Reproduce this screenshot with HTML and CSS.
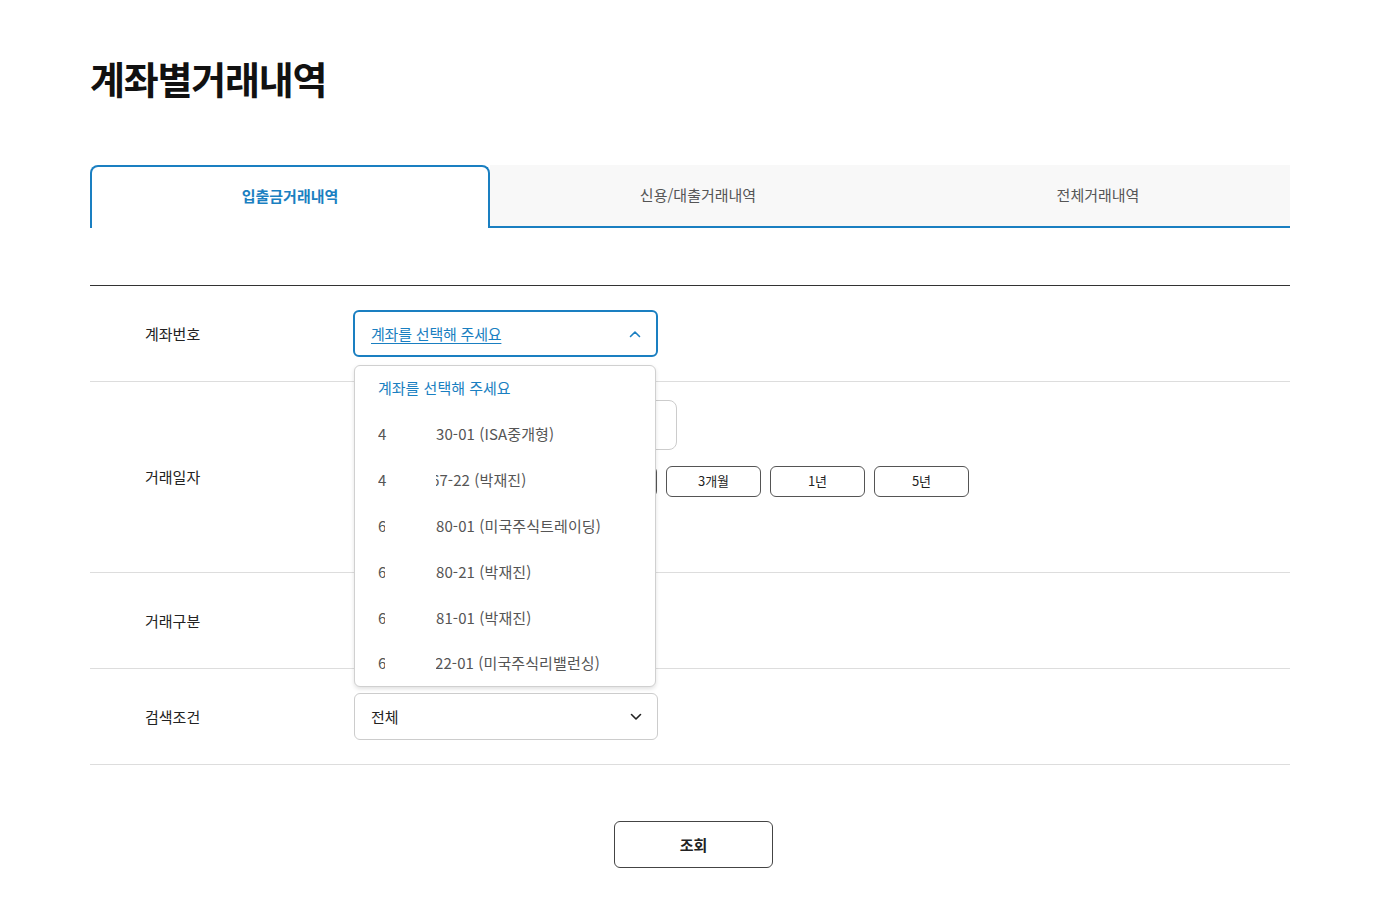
FILE: index.html
```html
<!DOCTYPE html>
<html lang="ko">
<head>
<meta charset="utf-8">
<title>계좌별거래내역</title>
<link rel="stylesheet" href="styles.css">
</head>
<body>
<div class="page">
  <h1 class="title">계좌별거래내역</h1>

  <div class="tabs">
    <div class="tab active">입출금거래내역</div>
    <div class="tab tab-mid">신용/대출거래내역</div>
    <div class="tab tab-last">전체거래내역</div>
  </div>

  <div class="form">
    <div class="row row-std">
      <div class="label">계좌번호</div>
      <div class="field">
        <div class="select-wrap">
          <div class="select open">
            <span class="select-text">계좌를 선택해 주세요</span>
            <svg class="chev" width="12" height="8" viewBox="0 0 12 8"><path d="M1.5 6.5 L6 2 L10.5 6.5" fill="none" stroke="#1a7fc1" stroke-width="1.6" stroke-linecap="round" stroke-linejoin="round"/></svg>
          </div>
          <ul class="dropdown">
            <li class="opt opt-placeholder">계좌를 선택해 주세요</li>
            <li class="opt"><span class="head">4</span><span class="tail"><span>30-01 (ISA중개형)</span></span></li>
            <li class="opt"><span class="head">4</span><span class="tail"><span class="cut">67-22 (박재진)</span></span></li>
            <li class="opt"><span class="head narrow">6</span><span class="tail"><span>80-01 (미국주식트레이딩)</span></span></li>
            <li class="opt"><span class="head narrow">6</span><span class="tail"><span>80-21 (박재진)</span></span></li>
            <li class="opt"><span class="head narrow">6</span><span class="tail"><span>81-01 (박재진)</span></span></li>
            <li class="opt"><span class="head narrow">6</span><span class="tail"><span class="cut-sm">22-01 (미국주식리밸런싱)</span></span></li>
          </ul>
        </div>
      </div>
    </div>

    <div class="row row-date">
      <div class="label">거래일자</div>
      <div class="field field-date">
        <div class="date-box"></div>
        <div class="period">
          <button class="pbtn">당일</button>
          <button class="pbtn">1주일</button>
          <button class="pbtn">1개월</button>
          <button class="pbtn">3개월</button>
          <button class="pbtn">1년</button>
          <button class="pbtn">5년</button>
        </div>
      </div>
    </div>

    <div class="row row-std">
      <div class="label">거래구분</div>
      <div class="field"><div class="spacer"></div></div>
    </div>

    <div class="row row-std">
      <div class="label">검색조건</div>
      <div class="field">
        <div class="select plain">
          <span class="select-text-plain">전체</span>
          <svg class="chev" width="12" height="8" viewBox="0 0 12 8"><path d="M1.5 1.5 L6 6 L10.5 1.5" fill="none" stroke="#222" stroke-width="1.6" stroke-linecap="round" stroke-linejoin="round"/></svg>
        </div>
      </div>
    </div>
  </div>

  <div class="actions">
    <button class="search-btn">조회</button>
  </div>
</div>
</body>
</html>
```

FILE: styles.css
```css
* { box-sizing: border-box; }
html, body { margin: 0; padding: 0; background: #fff; }
body {
  font-family: "Noto Sans CJK KR", "Noto Sans", sans-serif;
  color: #222;
}
.page {
  width: 1290px;
  padding-left: 90px;
  padding-bottom: 30px;
}
.title {
  margin: 0;
  padding-top: 52px;
  font-size: 38px;
  line-height: 52px;
  font-weight: 700;
  letter-spacing: -1.2px;
  color: #111;
}
.tabs {
  margin-top: 61px;
  display: flex;
  width: 1200px;
  height: 63px;
}
.tab {
  flex: 1;
  display: flex;
  align-items: center;
  justify-content: center;
  background: #f8f8f8;
  border-bottom: 2px solid #1a7fc1;
  font-size: 15px;
  letter-spacing: 0;
  color: #555;
  padding-bottom: 2px;
}
.tab-mid { flex: 0 0 416px; }
.tab.active {
  flex: 0 0 400px;
  background: #fff;
  border: 2px solid #1a7fc1;
  border-bottom: none;
  border-radius: 8px 8px 0 0;
  color: #1a7fc1;
  font-weight: 700;
  padding-bottom: 4px;
}
.form {
  margin-top: 57px;
  width: 1200px;
  border-top: 1px solid #333;
}
.row {
  display: flex;
  border-bottom: 1px solid #ddd;
}
.label {
  width: 263px;
  padding-left: 55px;
  padding-bottom: 1px;
  display: flex;
  align-items: center;
  font-size: 15px;
  letter-spacing: 0;
  color: #222;
}
.field {
  flex: 1;
  padding: 24px 0;
}
.row-date .field { padding: 18px 0 75px; }
.select-wrap { position: relative; width: 305px; }
.select {
  height: 47px;
  border-radius: 6px;
  display: flex;
  align-items: center;
  justify-content: space-between;
  padding: 0 15px 0 16px;
  background: #fff;
}
.select.open { border: 2px solid #1a7fc1; }
.select.plain {
  width: 304px;
  margin-left: 1px;
  border: 1px solid #ccc;
  padding-left: 16px;
}
.select-text {
  font-size: 15px;
  letter-spacing: -0.2px;
  color: #1a7fc1;
  text-decoration: underline;
  text-underline-offset: 3px;
}
.select-text-plain {
  font-size: 15px;
  letter-spacing: 0;
  color: #222;
}
.dropdown {
  position: absolute;
  top: 55px;
  left: 1px;
  width: 302px;
  margin: 0;
  padding: 0;
  list-style: none;
  background: #fff;
  border: 1px solid #d0d0d0;
  border-radius: 6px;
  box-shadow: 0 2px 4px rgba(0,0,0,0.12);
  z-index: 10;
}
.opt {
  height: 46px;
  display: flex;
  align-items: center;
  padding-left: 23px;
  padding-bottom: 3px;
  font-size: 15px;
  color: #555;
  letter-spacing: 0.1px;
  white-space: nowrap;
}
.opt:last-child { height: 44px; }
.opt-placeholder {
  color: #1a7fc1;
  letter-spacing: 0;
}
.head {
  display: inline-block;
  width: 9px;
  overflow: hidden;
}
.head.narrow { width: 7px; }
.tail {
  display: inline-block;
  overflow: hidden;
  margin-left: 49px;
}
.opt .head.narrow + .tail { margin-left: 51px; }
.cut { display: inline-block; margin-left: -5px; }
.cut-sm { display: inline-block; margin-left: -1px; }
.date-box {
  width: 323px;
  height: 50px;
  border: 1px solid #ccc;
  border-radius: 8px;
  margin-left: 1px;
}
.period {
  margin-top: 16px;
  display: flex;
  gap: 9px;
  margin-left: 1px;
}
.pbtn {
  width: 95px;
  height: 31px;
  border: 1px solid #555;
  border-radius: 6px;
  background: #fff;
  font-family: "Noto Sans CJK KR", "Noto Sans", sans-serif;
  font-size: 13px;
  letter-spacing: 0;
  color: #222;
  padding: 0 0 2px;
}
.spacer { height: 47px; }
.actions {
  margin-top: 56px;
  width: 1200px;
  display: flex;
  justify-content: center;
  padding-left: 7px;
}
.search-btn {
  width: 159px;
  height: 47px;
  border: 1px solid #444;
  border-radius: 6px;
  background: #fff;
  font-family: "Noto Sans CJK KR", "Noto Sans", sans-serif;
  font-size: 15px;
  font-weight: 700;
  color: #222;
  letter-spacing: 0;
  padding: 0;
}
```
